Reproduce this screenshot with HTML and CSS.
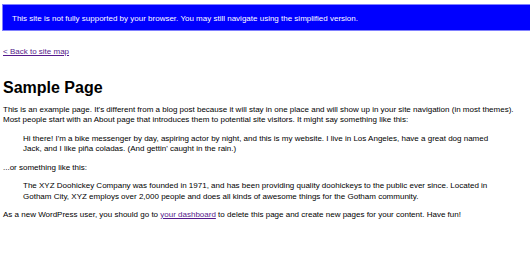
FILE: index.html
```html
<!DOCTYPE html>
<html lang="en">
<head>
<meta charset="utf-8">
<title>Sample Page</title>
<link rel="stylesheet" href="styles.css">
</head>
<body>
<div class="banner">This site is not fully supported by your browser. You may still navigate using the simplified version.</div>
<main class="content">
  <p class="back"><a href="#">&lt; Back to site map</a></p>
  <h1 class="title">Sample Page</h1>
  <p>This is an example page. It's different from a blog post because it will stay in one place and will show up in your site navigation (in most themes). Most people start with an About page that introduces them to potential site visitors. It might say something like this:</p>
  <blockquote class="quote"><p>Hi there! I'm a bike messenger by day, aspiring actor by night, and this is my website. I live in Los Angeles, have a great dog named Jack, and I like piña coladas. (And gettin' caught in the rain.)</p></blockquote>
  <p>...or something like this:</p>
  <blockquote class="quote"><p>The XYZ Doohickey Company was founded in 1971, and has been providing quality doohickeys to the public ever since. Located in Gotham City, XYZ employs over 2,000 people and does all kinds of awesome things for the Gotham community.</p></blockquote>
  <p>As a new WordPress user, you should go to <a href="#">your dashboard</a> to delete this page and create new pages for your content. Have fun!</p>
</main>
</body>
</html>
```

FILE: styles.css
```css
html, body {
  margin: 0;
  padding: 0;
  background: #fff;
}
body {
  font-family: "Liberation Sans", Arial, Helvetica, sans-serif;
  font-size: 8px;
  line-height: 10.5px;
  color: #000;
  padding-top: 4px;
}
.banner {
  margin-left: 2px;
  background: #0000ff;
  color: #fff;
  padding: 9px 9px 7px 9px;
  border-top: 1px solid #8080ff;
  border-bottom: 1px solid #8080ff;
  border-left: 1px solid #8080ff;
  line-height: 9px;
}
.content {
  padding: 0 3px;
}
.content p {
  margin: 8px 0;
}
.content .back {
  margin: 16px 0 0;
}
a {
  color: #551a8b;
  text-decoration: underline;
}
.title {
  font-size: 16px;
  line-height: 18px;
  font-weight: bold;
  margin: 21px 0 8px;
}
.quote {
  margin: 8px 20px;
}
.quote p {
  margin: 0;
}
```
